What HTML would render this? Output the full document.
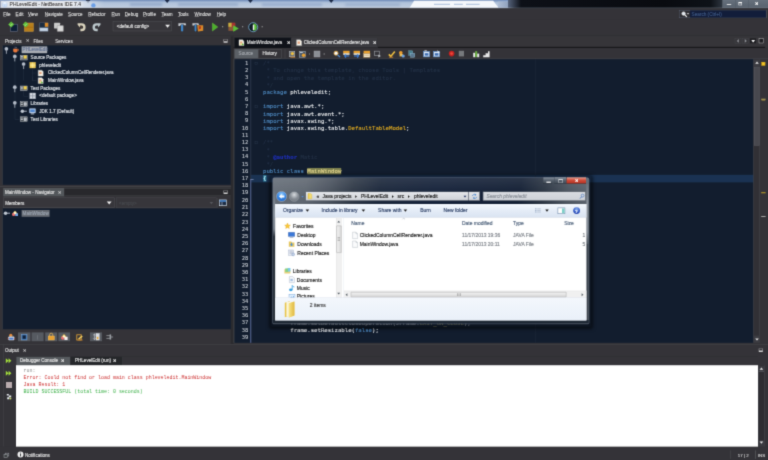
<!DOCTYPE html>
<html lang="en"><head><meta charset="utf-8"><title>PHLevelEdit - NetBeans IDE 7.4</title><style>
html,body{margin:0;padding:0;background:#343338;overflow:hidden}
body{width:768px;height:460px;position:relative;filter:url(#soft)}
#r{position:absolute;left:0;top:0;width:1920px;height:1150px;transform:scale(.4);transform-origin:0 0;overflow:hidden;background:#343338;font-family:"Liberation Sans",sans-serif}
#r div,#r svg{position:absolute;display:block}
#r svg{overflow:visible}
#r .t{white-space:nowrap;line-height:1;transform:translateY(-50%);width:auto;height:auto;-webkit-text-stroke:.35px}
#r .ln{white-space:pre;line-height:1;transform:translateY(-50%);font-family:"DejaVu Sans Mono","Liberation Mono",monospace;font-size:13.6px;color:#c4c9d0;text-align:right;height:auto;-webkit-text-stroke:.3px}
#r .cd{white-space:pre;line-height:1;transform:translateY(-50%);font-family:"DejaVu Sans Mono","Liberation Mono",monospace;font-size:14.15px;color:#eceef0;width:auto;height:auto;-webkit-text-stroke:.25px}
#r .cd span,#r .cd b{position:static}
#r .ot{white-space:pre;line-height:1;transform:translateY(-50%);font-family:"Liberation Mono",monospace;font-size:12.42px;width:auto;height:auto}
#r u{text-decoration:underline;text-underline-offset:1px}
</style></head><body><svg width="0" height="0" style="position:absolute"><filter id="soft" x="0" y="0" width="100%" height="100%" color-interpolation-filters="sRGB"><feConvolveMatrix order="3" kernelMatrix="1 5 1 5 25 5 1 5 1" divisor="49" edgeMode="duplicate" preserveAlpha="true"/></filter></svg><div id="r">
<div style="left:0px;top:0px;width:1920px;height:21px;background:linear-gradient(180deg,#6a86b4 0,#8ea6ca 14%,#b0c2da 32%,#bccade 80%,#d4dce8 100%)"></div>
<div style="left:325px;top:8px;width:80px;height:5.5px;background:#8fa6c8;filter:blur(2px)"></div>
<div style="left:445px;top:8px;width:150px;height:5.5px;background:#93a9c9;filter:blur(2px)"></div>
<div style="left:655px;top:8.5px;width:150px;height:5.5px;background:#8ea5c8;filter:blur(2px)"></div>
<div style="left:862.5px;top:8.5px;width:137.5px;height:5.5px;background:#95aaca;filter:blur(2px)"></div>
<svg style="left:214px;top:0px;width:12px;height:7.5px" viewBox="0 0 12 7.500"><path d="M0 0h12L6 7.500z" fill="#1c2a48"/></svg>
<svg style="left:411.5px;top:0px;width:12px;height:7.5px" viewBox="0 0 12 7.500"><path d="M0 0h12L6 7.500z" fill="#1c2a48"/></svg>
<svg style="left:620.25px;top:0px;width:12px;height:7.5px" viewBox="0 0 12 7.500"><path d="M0 0h12L6 7.500z" fill="#1c2a48"/></svg>
<svg style="left:821.5px;top:0px;width:12px;height:7.5px" viewBox="0 0 12 7.500"><path d="M0 0h12L6 7.500z" fill="#1c2a48"/></svg>
<div style="left:0px;top:2px;width:260px;height:18px;background:linear-gradient(90deg,rgba(226,229,234,.95) 0,rgba(232,235,240,.92) 70%,rgba(225,231,240,.6) 84%,rgba(220,228,240,0) 100%)"></div>
<div style="left:227.5px;top:7.5px;width:11px;height:11px;background:#6a9ee6;border-radius:50%;filter:blur(1.5px)"></div>
<svg style="left:1022.5px;top:1.5px;width:225px;height:19.5px" viewBox="0 0 225 19.500"><path d="M0 19.500L12 0h198l15 19.500z" fill="#f4f7fb"/><path d="M62 9h40M112 9h22M142 9h34" stroke="#b8c8e0" stroke-width="3"/></svg>
<div style="left:1245px;top:4px;width:30px;height:17px;background:linear-gradient(90deg,#aebdd4,#8a9cb8)"></div>
<div style="left:1270px;top:0px;width:650px;height:21px;background:linear-gradient(90deg,#55627a 0,#0d1017 5%,#090b10 60%,#0e1218 78%,#2a313b 82%)"></div>
<div style="left:0px;top:19.25px;width:1920px;height:1.75px;background:linear-gradient(90deg,#aab4c4 0,#aab4c4 66%,#4e5762 67%,#5a636e 100%)"></div>
<div style="left:0px;top:21px;width:1920px;height:1.25px;background:#26272b"></div>
<div style="left:0px;top:2px;width:4px;height:17.5px;background:linear-gradient(90deg,#7e88a4,rgba(140,150,175,0))"></div>
<svg style="left:4.5px;top:4px;width:13.5px;height:15px" viewBox="0 0 13.500 15"><path d="M6.750 .5l6 3v8l-6 3-6-3v-8z" fill="#cfe0f6" stroke="#a8c0e4"/><path d="M6.750 .5l6 3-6 3-6-3z" fill="#eaf3fd"/><path d="M6.750 6.500v8" stroke="#a8c0e4"/></svg>
<div class="t" style="left:24px;top:11.25px;color:#2c2a2c;-webkit-text-stroke:.15px;font-size:12.4px;text-shadow:0 0 6px #fff,0 0 10px #fff,0 0 14px #fff">PHLevelEdit - NetBeans IDE 7.4</div>
<div style="left:1805.75px;top:0px;width:114.25px;height:19.75px;background:linear-gradient(180deg,#66707c,#58626e);border-left:1px solid #7e8892;border-bottom:1px solid #8a949e;box-sizing:border-box"></div>
<div style="left:1817.25px;top:9.75px;width:10.5px;height:2.5px;background:#fff"></div>
<div style="left:1845.5px;top:5px;width:9.5px;height:7.75px;border:1.5px solid #fff;border-top-width:3px;box-sizing:border-box"></div>
<div class="t" style="left:1891.75px;top:8.75px;color:#fff;font-size:10.5px;font-weight:bold;transform:translate(-50%,-50%)">&#10005;</div>
<div style="left:1839px;top:0px;width:1px;height:18.5px;background:#4e5864"></div>
<div style="left:1870.25px;top:0px;width:1px;height:18.5px;background:#4e5864"></div>
<div style="left:0px;top:21.25px;width:1920px;height:26.25px;background:#343338"></div>
<div class="t" style="left:8.25px;top:35.5px;color:#dcdcdc;font-size:11.4px"><u>F</u>ile</div>
<div class="t" style="left:39px;top:35.5px;color:#dcdcdc;font-size:11.4px"><u>E</u>dit</div>
<div class="t" style="left:69.75px;top:35.5px;color:#dcdcdc;font-size:11.4px"><u>V</u>iew</div>
<div class="t" style="left:112px;top:35.5px;color:#dcdcdc;font-size:11.4px"><u>N</u>avigate</div>
<div class="t" style="left:170.25px;top:35.5px;color:#dcdcdc;font-size:11.4px"><u>S</u>ource</div>
<div class="t" style="left:220.5px;top:35.5px;color:#dcdcdc;font-size:11.4px"><u>R</u>efactor</div>
<div class="t" style="left:279px;top:35.5px;color:#dcdcdc;font-size:11.4px"><u>R</u>un</div>
<div class="t" style="left:312px;top:35.5px;color:#dcdcdc;font-size:11.4px"><u>D</u>ebug</div>
<div class="t" style="left:357.5px;top:35.5px;color:#dcdcdc;font-size:11.4px"><u>P</u>rofile</div>
<div class="t" style="left:403.75px;top:35.5px;color:#dcdcdc;font-size:11.4px"><u>T</u>eam</div>
<div class="t" style="left:444.75px;top:35.5px;color:#dcdcdc;font-size:11.4px"><u>T</u>ools</div>
<div class="t" style="left:486.5px;top:35.5px;color:#dcdcdc;font-size:11.4px"><u>W</u>indow</div>
<div class="t" style="left:541.75px;top:35.5px;color:#dcdcdc;font-size:11.4px"><u>H</u>elp</div>
<div style="left:1698.5px;top:25px;width:217.5px;height:20px;background:#2e2e33;border:1px solid #5e687c;box-sizing:border-box"></div>
<div style="left:1725px;top:26.25px;width:190px;height:17.5px;background:#121d3a"></div>
<div class="t" style="left:1729px;top:35.25px;color:#3d5782;font-size:11.6px">Search (Ctrl+I)</div>
<svg style="left:1702.5px;top:27.5px;width:20px;height:16px" viewBox="0 0 20 16"><circle cx="6" cy="6" r="4.2" fill="#dfe6ee" stroke="#fff" stroke-width="1.6"/><path d="M9 9l5 5" stroke="#fff" stroke-width="2.6"/><path d="M14 5h6l-3 3.4z" fill="#fff"/></svg>
<div style="left:0px;top:47.5px;width:1920px;height:42.5px;background:#343338"></div>
<div style="left:0px;top:89px;width:1920px;height:1.25px;background:#2c2e30"></div>
<svg style="left:21px;top:54.5px;width:25px;height:25px" viewBox="0 0 25 25"><rect x="5" y="5.5" width="18" height="18" fill="#0f2038" stroke="#6d7486" stroke-width="1.4"/><path d="M7 -1l7.500 7.500L7 14 -.5 6.500z" fill="#5fc03a"/><path d="M3.500 6.500l2.500 2.500 4.500-5" stroke="#d8f5c8" stroke-width="1.500" fill="none"/></svg>
<svg style="left:56.5px;top:54.5px;width:27.5px;height:25px" viewBox="0 0 27.500 25"><rect x="4" y="2.500" width="22.500" height="21" fill="#b8801c" stroke="#d09a40" stroke-width="1.200"/><rect x="4" y="12" width="22.500" height="2" fill="#a86c10"/><path d="M7 -1l7.500 7.500L7 14 -.5 6.500z" fill="#5fc03a"/><path d="M3.500 6.500l2.500 2.500 4.500-5" stroke="#d8f5c8" stroke-width="1.500" fill="none"/></svg>
<svg style="left:96.5px;top:54.5px;width:25px;height:25px" viewBox="0 0 25 25"><rect x="1.500" y="2" width="22" height="21.500" fill="#9fb4cc"/><rect x="1.500" y="2" width="22" height="12" fill="#1c2c40"/><rect x="15" y="2" width="8.500" height="10" fill="#d98a2a"/><rect x="3" y="15.500" width="19" height="6.500" fill="#c6d4e4"/></svg>
<svg style="left:134px;top:54.5px;width:26.25px;height:25px" viewBox="0 0 26 25"><rect x="1" y="2" width="15" height="14" rx="1" fill="#c9c9c9"/><rect x="9" y="9" width="15.500" height="14.500" rx="1" fill="#dadada" stroke="#8a8a8a" stroke-width="1"/></svg>
<svg style="left:191.5px;top:55.5px;width:24px;height:24px" viewBox="0 0 24 24"><path d="M2 2h10a10 10 0 0 1 0 20h-3v-6h3a4 4 0 0 0 0-8h-4v5l-6-7z" fill="#d9d2bc"/><path d="M9 10l4 3" stroke="#6a4a2a" stroke-width="2"/></svg>
<svg style="left:229px;top:55.5px;width:24.5px;height:24px" viewBox="0 0 24 24"><path d="M22 2H12a10 10 0 0 0 0 20h3v-6h-3a4 4 0 0 1 0-8h4v5l6-7z" fill="#bcc8cc"/></svg>
<div style="left:282px;top:53.25px;width:147px;height:24.25px;background:#37363b;border:1px solid #56585c;box-sizing:border-box"></div>
<div class="t" style="left:292px;top:65.5px;color:#e6e6e6;font-size:11.4px">&lt;default config&gt;</div>
<svg style="left:412.5px;top:61.5px;width:12px;height:7.5px" viewBox="0 0 12 7.500"><path d="M0 0h12l-6 7.500z" fill="#f0f0f0"/></svg>
<svg style="left:444px;top:55px;width:22.5px;height:25px" viewBox="0 0 22.500 25"><path d="M2 3h18l1.500 5h-5l-1-1.500h-7l-2.500 3.500H2z" fill="#c9ced4"/><rect x="8.500" y="6.500" width="5.500" height="17" rx="2" fill="#3f86c8"/></svg>
<svg style="left:480px;top:55px;width:30px;height:25px" viewBox="0 0 30 25"><path d="M1 3h15l1.500 4.500h-4l-1-1.500H7l-2 3H1z" fill="#c9ced4"/><rect x="6.500" y="6.500" width="4.500" height="17" rx="2" fill="#3f86c8"/><path d="M13 8h15v14l-13 1.500z" fill="#d98a2a"/><path d="M17 10l6 1-1 6-5 2z" fill="#b43a1a"/></svg>
<svg style="left:530px;top:56.5px;width:15px;height:21px" viewBox="0 0 15 21"><path d="M1 .5L14.500 10.500 1 20.500z" fill="#4cae2c" stroke="#6fd044" stroke-width="1"/></svg>
<div style="left:554.75px;top:65.5px;width:2.75px;height:2.75px;background:#bfbfbf"></div>
<svg style="left:570px;top:55px;width:28.5px;height:25px" viewBox="0 0 28.500 25"><rect x="1" y="2" width="17" height="20" fill="#8a5a3a"/><rect x="1" y="2" width="8.500" height="10" fill="#c8b040"/><rect x="9.500" y="2" width="8.500" height="10" fill="#a83030"/><path d="M13 8l14 8.500-14 8z" fill="#5cc038"/></svg>
<div style="left:604.75px;top:65.5px;width:2.75px;height:2.75px;background:#bfbfbf"></div>
<svg style="left:619.5px;top:55px;width:26px;height:26px" viewBox="0 0 26 26"><circle cx="13" cy="13" r="11.300" fill="#0d1a24" stroke="#7fb4d8" stroke-width="2"/><path d="M13 4a9 9 0 0 1 0 18z" fill="#5cc038"/><rect x="12" y="7" width="3.500" height="13" fill="#f4f4f4"/></svg>
<div style="left:653.75px;top:65.5px;width:2.75px;height:2.75px;background:#bfbfbf"></div>
<div class="t" style="left:12.5px;top:102.5px;color:#dcdcdc;font-size:11.4px">Projects</div>
<div class="t" style="left:64px;top:102.5px;color:#dcdcdc;font-size:10px">&#10005;</div>
<div class="t" style="left:83.75px;top:102.5px;color:#dcdcdc;font-size:11.4px">Files</div>
<div class="t" style="left:138px;top:102.5px;color:#dcdcdc;font-size:11.4px">Services</div>
<div style="left:559px;top:97.5px;width:10px;height:9px;border:1px solid #d0d0d0;box-sizing:border-box;border-bottom-width:4px"></div>
<div style="left:6px;top:113px;width:571px;height:348.75px;background:#121d2e;border-left:1.5px solid #4a4d50;border-top:1px solid #2a2d30;box-sizing:border-box"></div>
<div style="left:577px;top:90.5px;width:7.25px;height:769.5px;background:#2a2a2e"></div>
<div style="left:36.5px;top:151.12px;width:1px;height:146.5px;background:#2c384a"></div>
<div style="left:58.5px;top:170.38px;width:1px;height:31px;background:#2c384a"></div>
<div style="left:81px;top:173.12px;width:1px;height:9.5px;background:#2c384a"></div>
<div style="left:81px;top:182.12px;width:10px;height:1px;background:#2c384a"></div>
<div style="left:81px;top:192.38px;width:1px;height:9.5px;background:#2c384a"></div>
<div style="left:81px;top:201.38px;width:10px;height:1px;background:#2c384a"></div>
<div style="left:81px;top:182.12px;width:1px;height:19.25px;background:#2c384a"></div>
<div style="left:58.5px;top:228.12px;width:1px;height:11.75px;background:#2c384a"></div>
<div style="left:58.5px;top:239.88px;width:11.25px;height:1px;background:#2c384a"></div>
<div style="left:36.5px;top:297.62px;width:11.25px;height:1px;background:#2c384a"></div>
<svg style="left:10.75px;top:116.88px;width:10px;height:17.5px" viewBox="0 0 8 14"><circle cx="4" cy="4" r="3.700" fill="#b4bcc8"/><rect x="3" y="6" width="2" height="8" fill="#98a0ac"/></svg>
<svg style="left:31.5px;top:117.38px;width:15px;height:14px" viewBox="0 0 15 14"><path d="M1 5h11v5a4 4 0 0 1-4 4H5a4 4 0 0 1-4-4z" fill="#e8783c"/><path d="M12 6h2v4h-2" fill="none" stroke="#e8783c" stroke-width="1.500"/><path d="M5 0q2 2 0 4M8 0q2 2 0 4" stroke="#c8c8d8" stroke-width="1" fill="none"/></svg>
<div style="left:54.25px;top:115.88px;width:63.5px;height:17.25px;background:#a9adb4"></div>
<div class="t" style="left:56.5px;top:124.38px;color:#637291;font-size:11.4px">PHLevelEdit</div>
<svg style="left:31.75px;top:136.12px;width:10px;height:17.5px" viewBox="0 0 8 14"><circle cx="4" cy="4" r="3.700" fill="#b4bcc8"/><rect x="3" y="6" width="2" height="8" fill="#98a0ac"/></svg>
<svg style="left:50px;top:137.12px;width:18.5px;height:13.5px" viewBox="0 0 18.500 13.500"><rect x=".5" y="1" width="17.500" height="12" fill="#5a6068" stroke="#c8ccd0" stroke-width="1"/><rect x="9" y="1.500" width="8" height="8" fill="#f0d050"/><rect x="2" y="3" width="5" height="2" fill="#d8dce0"/><rect x="2" y="7" width="5" height="2" fill="#d8dce0"/></svg>
<div class="t" style="left:76.5px;top:143.62px;color:#dfe3e8;font-size:11.4px">Source Packages</div>
<svg style="left:53.75px;top:155.38px;width:10px;height:17.5px" viewBox="0 0 8 14"><circle cx="4" cy="4" r="3.700" fill="#b4bcc8"/><rect x="3" y="6" width="2" height="8" fill="#98a0ac"/></svg>
<svg style="left:73.75px;top:155.38px;width:15.5px;height:15.5px" viewBox="0 0 15.500 15.500"><rect x=".5" y=".5" width="14.500" height="14.500" fill="#f0d060" stroke="#d8b040"/><path d="M7.750 1v14M1 7.750h14" stroke="#fff3b0" stroke-width="1.600"/></svg>
<div class="t" style="left:98.25px;top:162.88px;color:#dfe3e8;font-size:11.4px">phleveledit</div>
<svg style="left:95px;top:174.62px;width:13.5px;height:15.5px" viewBox="0 0 13.500 15.500"><path d="M.5.5h9l3.500 3.500v11H.5z" fill="#f6f4ec" stroke="#c4c4c0"/><rect x="3" y="4.500" width="6" height="6" fill="#ecc0a0"/><path d="M3.500 6.500h5M3.500 9h5" stroke="#d87850" stroke-width="1.100"/></svg>
<div class="t" style="left:120px;top:182.12px;color:#dfe3e8;font-size:11.15px">ClickedColumnCellRenderer.java</div>
<svg style="left:95px;top:193.88px;width:13.5px;height:15.5px" viewBox="0 0 13.500 15.500"><path d="M.5.5h9l3.500 3.500v11H.5z" fill="#f6f4ec" stroke="#c4c4c0"/><rect x="3" y="4.500" width="6" height="6" fill="#ecc0a0"/><path d="M3.500 6.500h5M3.500 9h5" stroke="#d87850" stroke-width="1.100"/><path d="M8 9l5 3-5 3z" fill="#58b838"/><rect x="2.500" y="9" width="5" height="5" fill="#e8d890"/></svg>
<div class="t" style="left:120px;top:201.38px;color:#dfe3e8;font-size:11.4px">MainWindow.java</div>
<svg style="left:31.75px;top:213.12px;width:10px;height:17.5px" viewBox="0 0 8 14"><circle cx="4" cy="4" r="3.700" fill="#b4bcc8"/><rect x="3" y="6" width="2" height="8" fill="#98a0ac"/></svg>
<svg style="left:50px;top:214.12px;width:18.5px;height:13.5px" viewBox="0 0 18.500 13.500"><rect x=".5" y="1" width="17.500" height="12" fill="#5a6068" stroke="#c8ccd0" stroke-width="1"/><rect x="9" y="1.500" width="8" height="8" fill="#f0d050"/><rect x="2" y="3" width="5" height="2" fill="#d8dce0"/><rect x="2" y="7" width="5" height="2" fill="#d8dce0"/></svg>
<div class="t" style="left:76.5px;top:220.62px;color:#dfe3e8;font-size:11.4px">Test Packages</div>
<svg style="left:73.75px;top:232.38px;width:15.5px;height:15.5px" viewBox="0 0 15.500 15.500"><rect x=".5" y=".5" width="14.500" height="14.500" fill="#d8dce4" stroke="#a8b0bc"/><path d="M7.750 1v14M1 7.750h14" stroke="#7a8494" stroke-width="1.600"/></svg>
<div class="t" style="left:98.25px;top:239.88px;color:#dfe3e8;font-size:11.4px">&lt;default package&gt;</div>
<svg style="left:31.75px;top:251.62px;width:10px;height:17.5px" viewBox="0 0 8 14"><circle cx="4" cy="4" r="3.700" fill="#b4bcc8"/><rect x="3" y="6" width="2" height="8" fill="#98a0ac"/></svg>
<svg style="left:50px;top:252.63px;width:18.5px;height:13.5px" viewBox="0 0 18.500 13.500"><rect x=".5" y="1" width="17.500" height="12" fill="#4a5058" stroke="#c8ccd0" stroke-width="1"/><rect x="9.500" y="3" width="7" height="8" fill="#e4e8ec"/><path d="M11 5h4M11 7h4M11 9h4" stroke="#707888" stroke-width="1"/><rect x="2" y="3" width="5" height="2" fill="#d8dce0"/><rect x="2" y="7" width="5" height="2" fill="#d8dce0"/></svg>
<div class="t" style="left:76.5px;top:259.12px;color:#dfe3e8;font-size:11.4px">Libraries</div>
<svg style="left:51.25px;top:273.38px;width:16px;height:10px" viewBox="0 0 13 8"><circle cx="4" cy="4" r="3.600" fill="#c0c8d2"/><rect x="6" y="3" width="7" height="2" fill="#b0b8c4"/></svg>
<svg style="left:72.5px;top:270.88px;width:16.5px;height:15.5px" viewBox="0 0 16.500 15.500"><rect x=".5" y=".5" width="15.500" height="11" rx="1" fill="#dfe8f4" stroke="#7a9ac8"/><rect x="2.500" y="2.500" width="11.500" height="7" fill="#4f86d0"/><rect x="4" y="12.500" width="8.500" height="2.500" fill="#c0c8d4"/></svg>
<div class="t" style="left:98.25px;top:278.38px;color:#dfe3e8;font-size:11.4px">JDK 1.7 (Default)</div>
<svg style="left:50px;top:291.12px;width:18.5px;height:13.5px" viewBox="0 0 18.500 13.500"><rect x=".5" y="1" width="17.500" height="12" fill="#4a5058" stroke="#c8ccd0" stroke-width="1"/><rect x="9.500" y="3" width="7" height="8" fill="#e4e8ec"/><path d="M11 5h4M11 7h4M11 9h4" stroke="#707888" stroke-width="1"/><rect x="2" y="3" width="5" height="2" fill="#d8dce0"/><rect x="2" y="7" width="5" height="2" fill="#d8dce0"/></svg>
<div class="t" style="left:76.5px;top:297.62px;color:#dfe3e8;font-size:11.4px">Test Libraries</div>
<div style="left:0px;top:466px;width:577.5px;height:1.25px;background:#55585b"></div>
<div style="left:8.25px;top:470px;width:153px;height:20.5px;background:#53575b"></div>
<div class="t" style="left:12.5px;top:480.5px;color:#e0e0e0;font-size:11.4px">MainWindow - Navigator</div>
<div class="t" style="left:146px;top:480.5px;color:#e0e0e0;font-size:10px">&#10005;</div>
<div style="left:161.25px;top:470.5px;width:415.75px;height:19px;background:#28282c;border-top:1px solid #4a4c50;border-bottom:1px solid #4a4c50;box-sizing:border-box"></div>
<div style="left:559px;top:475.5px;width:10px;height:9px;border:1px solid #d0d0d0;box-sizing:border-box;border-bottom-width:4px"></div>
<div style="left:8.25px;top:494px;width:278px;height:26.25px;background:#37363b;border:1px solid #56585c;box-sizing:border-box"></div>
<div class="t" style="left:13px;top:507.5px;color:#e6e6e6;font-size:11.4px">Members</div>
<svg style="left:266.5px;top:504px;width:12px;height:7.5px" viewBox="0 0 12 7.500"><path d="M0 0h12l-6 7.500z" fill="#f0f0f0"/></svg>
<div style="left:291px;top:494px;width:250px;height:26.25px;background:#37363b;border:1px solid #4a4c50;box-sizing:border-box"></div>
<div class="t" style="left:297.5px;top:507.5px;color:#47494e;font-size:11.4px">&lt;empty&gt;</div>
<svg style="left:524px;top:504.5px;width:9px;height:6px" viewBox="0 0 12 7.500"><path d="M0 0h12l-6 7.500z" fill="#56585d"/></svg>
<div style="left:544px;top:494.5px;width:26.5px;height:25px;background:#343338;border-left:1px solid #4a4c50;box-sizing:border-box"></div>
<svg style="left:547.5px;top:498.5px;width:18.5px;height:16px" viewBox="0 0 18.500 16"><rect x=".8" y=".8" width="17" height="14.400" fill="#1c2c44" stroke="#d8e4f0" stroke-width="1.600"/><rect x="1.500" y="1.500" width="15.500" height="4" fill="#4a88d0"/><path d="M7 6v9" stroke="#d8e4f0" stroke-width="1.400"/></svg>
<div style="left:6px;top:521px;width:571px;height:302px;background:#121d2e;border-left:1.5px solid #4a4d50;box-sizing:border-box"></div>
<svg style="left:9px;top:528px;width:16px;height:10px" viewBox="0 0 13 8"><circle cx="4" cy="4" r="3.600" fill="#c0c8d2"/><rect x="6" y="3" width="7" height="2" fill="#b0b8c4"/></svg>
<svg style="left:29px;top:525.5px;width:17.5px;height:15px" viewBox="0 0 17.500 15"><path d="M8.500 1l7 8H1.500z" fill="#f0c040"/><circle cx="5" cy="10" r="4" fill="#e87070"/><rect x="9" y="7" width="7" height="7" fill="#78a8e8"/><circle cx="8.500" cy="6" r="3.500" fill="#fff8d0"/></svg>
<div style="left:54.25px;top:524.5px;width:70px;height:17.25px;background:#676c74"></div>
<div class="t" style="left:56.5px;top:533.25px;color:#9aa3b0;font-size:11.4px">MainWindow</div>
<div style="left:45px;top:831.25px;width:30.75px;height:21.5px;background:#565a61"></div>
<div style="left:79.25px;top:831.25px;width:30px;height:21.5px;background:#565a61"></div>
<div style="left:112.5px;top:831.25px;width:30px;height:21.5px;background:#565a61"></div>
<div style="left:145.75px;top:831.25px;width:29.25px;height:21.5px;background:#565a61"></div>
<div style="left:225px;top:831.25px;width:30px;height:21.5px;background:#565a61"></div>
<svg style="left:18.75px;top:832.5px;width:18.75px;height:20px" viewBox="0 0 19 20"><circle cx="8" cy="5" r="4" fill="#e89040"/><rect x="2" y="8" width="15" height="10" rx="2" fill="#e8ecf4"/><rect x="4" y="11" width="11" height="5" fill="#4878c8"/><path d="M2 12l-2 3M17 12l2 3" stroke="#d04030" stroke-width="1.500"/></svg>
<svg style="left:53px;top:834.5px;width:15px;height:15.5px" viewBox="0 0 15 15.500"><rect x=".5" y=".5" width="14" height="14.500" fill="#3a6ea8" stroke="#88b0e0"/><rect x="3.500" y="3.500" width="8" height="8.500" fill="#0f2038"/></svg>
<div style="left:93.5px;top:837.5px;width:1.5px;height:11.5px;background:#8a8e94"></div>
<svg style="left:119.5px;top:834px;width:16.5px;height:16.5px" viewBox="0 0 16.500 16.500"><rect x=".5" y="6" width="15.500" height="10" fill="#e8a030" stroke="#f8c868"/><path d="M4 6V3a4 4 0 0 1 8 0v3" fill="none" stroke="#f0b850" stroke-width="1.800"/></svg>
<svg style="left:151.5px;top:833.5px;width:18px;height:17px" viewBox="0 0 18 17"><path d="M8 1l7 8H1z" fill="#f0c040"/><circle cx="5" cy="11" r="4.500" fill="#e87070"/><rect x="9" y="8" width="8" height="8" fill="#f8f0f0"/><circle cx="8" cy="7" r="3" fill="#fff8d0"/></svg>
<svg style="left:191px;top:834.5px;width:17.5px;height:16.5px" viewBox="0 0 17.500 16.500"><rect x="1" y="2" width="11" height="13" fill="none" stroke="#e8a838" stroke-width="2"/><path d="M4 12l9-8 3 2-9 8z" fill="#f8d060"/><path d="M3 15h13" stroke="#e09030" stroke-width="1.500"/></svg>
<svg style="left:231.5px;top:833px;width:17.5px;height:18.5px" viewBox="0 0 17.500 18.500"><rect x="8" y="1" width="8" height="16" fill="#d8dce4" stroke="#f0f0f0"/><rect x="10" y="9" width="4" height="6" fill="#e8a838"/><path d="M4 2v14M1 5l3-3 3 3M1 13l3 3 3-3" stroke="#e8ecf0" stroke-width="1.400" fill="none"/></svg>
<svg style="left:264.5px;top:834px;width:18.75px;height:17px" viewBox="0 0 19 17"><path d="M1 5h9M1 12h9" stroke="#b8bcc0" stroke-width="1.600"/><path d="M10 8.500h8" stroke="#b8bcc0" stroke-width="1.600"/><rect x="9" y="2" width="4" height="13" fill="#9a9ea4"/></svg>
<div style="left:0px;top:860px;width:1920px;height:1.25px;background:#4c4f52"></div>
<div style="left:584px;top:91px;width:1336px;height:28.5px;background:#363539"></div>
<div style="left:584px;top:117.25px;width:1329px;height:2.25px;background:#18181b"></div>
<div style="left:586px;top:94px;width:142px;height:25.5px;background:#0f1219;border:1px solid #2a2d33;border-bottom:none;box-sizing:border-box"></div>
<svg style="left:596.5px;top:98.5px;width:13.5px;height:15.5px" viewBox="0 0 13.500 15.500"><path d="M.5.5h9l3.500 3.500v11H.5z" fill="#f6f4ec" stroke="#c4c4c0"/><rect x="3" y="4.500" width="6" height="6" fill="#ecc0a0"/><path d="M3.500 6.500h5M3.500 9h5" stroke="#d87850" stroke-width="1.100"/><path d="M8 9l5 3-5 3z" fill="#58b838"/><rect x="2.500" y="9" width="5" height="5" fill="#e8d890"/></svg>
<div class="t" style="left:616.75px;top:106.5px;color:#e4e4e4;font-size:11.4px">MainWindow.java</div>
<div class="t" style="left:716.5px;top:106.5px;color:#e4e4e4;font-size:9px;font-weight:bold">&#10005;</div>
<div style="left:728px;top:94.5px;width:216.5px;height:24px;background:#3b3b40;border-right:1px solid #2a2c2e;box-sizing:border-box"></div>
<svg style="left:741px;top:98.5px;width:13.5px;height:15.5px" viewBox="0 0 13.500 15.500"><path d="M.5.5h9l3.500 3.500v11H.5z" fill="#f6f4ec" stroke="#c4c4c0"/><rect x="3" y="4.500" width="6" height="6" fill="#ecc0a0"/><path d="M3.500 6.500h5M3.500 9h5" stroke="#d87850" stroke-width="1.100"/></svg>
<div class="t" style="left:759.25px;top:106.5px;color:#e4e4e4;font-size:11.15px">ClickedColumnCellRenderer.java</div>
<div class="t" style="left:933.5px;top:106.5px;color:#e4e4e4;font-size:9px;font-weight:bold">&#10005;</div>
<div style="left:1837px;top:95.5px;width:16px;height:13.5px;border:1px solid #484a4f;box-sizing:border-box"></div>
<div style="left:1855.5px;top:95.5px;width:16px;height:13.5px;border:1px solid #484a4f;box-sizing:border-box"></div>
<svg style="left:1841px;top:97px;width:7px;height:10.5px" viewBox="0 0 7.500 11"><path d="M6.500 .5v10L1 5.500z" fill="#8e9096"/></svg>
<svg style="left:1860.5px;top:97px;width:7px;height:10.5px" viewBox="0 0 7.500 11"><path d="M1 .5v10l5.500-5z" fill="#8e9096"/></svg>
<div style="left:1875.25px;top:96px;width:14.5px;height:12px;background:#1d1d21"></div>
<svg style="left:1877.5px;top:99.5px;width:10px;height:5.5px" viewBox="0 0 12 7"><path d="M0 0h12l-5 7h-2z" fill="#f4f4f4"/></svg>
<div style="left:1896.75px;top:96px;width:13.25px;height:12px;background:#1d1d21;border:1.6px solid #e4e4e4;box-sizing:border-box"></div>
<div style="left:584px;top:120.5px;width:1336px;height:26.5px;background:#343338"></div>
<div style="left:584px;top:146.5px;width:1336px;height:1.5px;background:#5a6068"></div>
<div style="left:586.25px;top:122.5px;width:58.25px;height:23px;background:#5b6066"></div>
<div class="t" style="left:596.5px;top:134.25px;color:#a4a8ae;font-size:11.4px">Source</div>
<div style="left:644.5px;top:122.5px;width:59.5px;height:23px;background:#343338;border:1px solid #5b5e62;box-sizing:border-box"></div>
<div class="t" style="left:656.5px;top:134.25px;color:#e4e4e4;font-size:11.4px">History</div>
<div style="left:711.5px;top:123px;width:1px;height:22.5px;background:#55585b"></div>
<svg style="left:721.75px;top:125.5px;width:18.5px;height:19px" viewBox="0 0 18.5 19"><rect x="1" y="2" width="14" height="14" fill="#6a7078" stroke="#c8ccd0"/><circle cx="9" cy="8" r="4" fill="#f0c040"/><path d="M4 17h12" stroke="#e89030" stroke-width="2"/></svg>
<svg style="left:746.75px;top:125.5px;width:18.5px;height:19px" viewBox="0 0 18.5 19"><rect x="1" y="2" width="15" height="15" fill="#4a5868" stroke="#c8d0d8"/><circle cx="12" cy="12" r="4.500" fill="#e8a030"/><rect x="3" y="4" width="7" height="2" fill="#dfe8f0"/></svg>
<div style="left:772.5px;top:133.5px;width:2.75px;height:2.75px;background:#bfbfbf"></div>
<svg style="left:784px;top:125.5px;width:18.5px;height:19px" viewBox="0 0 18.5 19"><rect x="1" y="1.500" width="15" height="15" fill="#8a8e94" stroke="#a8acb2"/></svg>
<div style="left:809.25px;top:133.5px;width:2.75px;height:2.75px;background:#bfbfbf"></div>
<svg style="left:832.5px;top:125.5px;width:18.5px;height:19px" viewBox="0 0 18.5 19"><circle cx="7" cy="7" r="5" fill="#f4f8ff" stroke="#e8a838" stroke-width="2"/><path d="M11 11l6 6" stroke="#4a90e0" stroke-width="3"/></svg>
<svg style="left:856.75px;top:125.5px;width:18.5px;height:19px" viewBox="0 0 18.5 19"><rect x="1" y="1" width="16" height="6" fill="#e8a030"/><rect x="1" y="7" width="16" height="4" fill="#f4ead0"/><path d="M4 14h12M4 14l4-4M4 14l4 4" stroke="#3a80e0" stroke-width="2.600" fill="none"/></svg>
<svg style="left:882.5px;top:125.5px;width:18.5px;height:19px" viewBox="0 0 18.5 19"><rect x="1" y="1" width="16" height="6" fill="#e8a030"/><rect x="1" y="7" width="16" height="4" fill="#f4ead0"/><path d="M2 14h12M14 14l-4-4M14 14l-4 4" stroke="#3a80e0" stroke-width="2.600" fill="none"/></svg>
<svg style="left:908.25px;top:125.5px;width:18.5px;height:19px" viewBox="0 0 18.5 19"><rect x="1" y="1" width="16" height="7" fill="#e8a030"/><rect x="1" y="8" width="16" height="9" fill="#f4ead0" stroke="#c8a060"/><path d="M3 12h12" stroke="#b08850" stroke-width="1.500"/></svg>
<svg style="left:934.5px;top:125.5px;width:18.5px;height:19px" viewBox="0 0 18.5 19"><rect x="1.500" y="2" width="12" height="11" fill="none" stroke="#9a9ea4" stroke-width="1.600"/><path d="M11 10l6 4-6 4z" fill="#c8ccd0"/></svg>
<svg style="left:970px;top:125.5px;width:18.5px;height:19px" viewBox="0 0 18.5 19"><path d="M2 10l5 5L17 3" stroke="#f0c040" stroke-width="4" fill="none"/><path d="M3 17h10" stroke="#e89030" stroke-width="2"/></svg>
<svg style="left:995px;top:125.5px;width:18.5px;height:19px" viewBox="0 0 18.5 19"><circle cx="7" cy="6" r="4.500" fill="#f0a030"/><rect x="4" y="9" width="8" height="6" fill="#e8c060"/><circle cx="13" cy="14" r="4" fill="#6aa0e0"/></svg>
<svg style="left:1021px;top:125.5px;width:18.5px;height:19px" viewBox="0 0 18.5 19"><rect x="1" y="1" width="10" height="11" fill="#4a8090" stroke="#7ab0c0"/><rect x="6" y="7" width="10" height="10" fill="#5a7890" stroke="#9ac0d8"/></svg>
<svg style="left:1058px;top:125.5px;width:18.5px;height:19px" viewBox="0 0 18.5 19"><rect x="1" y="3" width="15" height="13" fill="#dfeaf8" stroke="#5a90d0" stroke-width="1.600"/><rect x="4" y="7" width="9" height="6" fill="#3a6ab0"/><path d="M3 1h6" stroke="#fff" stroke-width="2"/></svg>
<svg style="left:1082.5px;top:125.5px;width:18.5px;height:19px" viewBox="0 0 18.5 19"><rect x="1" y="3" width="15" height="13" fill="#dfeaf8" stroke="#5a90d0" stroke-width="1.600"/><rect x="4" y="7" width="9" height="6" fill="#3a6ab0"/><path d="M10 1l6 4" stroke="#fff" stroke-width="2"/></svg>
<svg style="left:1120.75px;top:126px;width:16px;height:16px" viewBox="0 0 16 16"><circle cx="8" cy="8" r="7" fill="#c42020"/><circle cx="8" cy="8" r="3.500" fill="#e84a3a"/></svg>
<div style="left:1147px;top:127px;width:13px;height:14px;background:#77797c"></div>
<svg style="left:1182px;top:125.5px;width:18.5px;height:19px" viewBox="0 0 18.5 19"><rect x="1" y="6" width="5" height="11" fill="#e8ece8"/><rect x="6" y="2" width="5" height="15" fill="#6ab040"/><rect x="11" y="8" width="5" height="9" fill="#e8ece8"/></svg>
<svg style="left:1206.5px;top:125.5px;width:18.5px;height:19px" viewBox="0 0 18.5 19"><path d="M1 17v-5h6V7h6V2h4v15z" fill="#e8e8e8"/></svg>
<div style="left:584px;top:148px;width:2.5px;height:709px;background:#4a4d50"></div>
<div style="left:586px;top:148px;width:1297.5px;height:708.5px;background:#121d2e"></div>
<div style="left:627.25px;top:437.25px;width:1256.25px;height:19px;background:#1a3252"></div>
<div style="left:625.5px;top:148px;width:2px;height:708.5px;background:#333d52"></div>
<div style="left:1338.5px;top:148px;width:1px;height:708.5px;background:#222c3e"></div>
<div class="ln" style="left:586px;top:158px;width:34.5px">1</div>
<div class="cd" style="left:657.5px;top:158px"><span style="color:#243247">/*</span></div>
<div class="ln" style="left:586px;top:176.02px;width:34.5px">2</div>
<div class="cd" style="left:657.5px;top:176.02px"><span style="color:#243247"> * To change this template, choose Tools | Templates</span></div>
<div class="ln" style="left:586px;top:194.05px;width:34.5px">3</div>
<div class="cd" style="left:657.5px;top:194.05px"><span style="color:#243247"> * and open the template in the editor.</span></div>
<div class="ln" style="left:586px;top:212.07px;width:34.5px">4</div>
<div class="cd" style="left:657.5px;top:212.07px"><span style="color:#243247"> */</span></div>
<div class="ln" style="left:586px;top:230.1px;width:34.5px">5</div>
<div class="cd" style="left:657.5px;top:230.1px"><span style="color:#4f8cc4">package</span> phleveledit;</div>
<div class="ln" style="left:586px;top:248.12px;width:34.5px">6</div>
<div class="ln" style="left:586px;top:266.15px;width:34.5px">7</div>
<div class="cd" style="left:657.5px;top:266.15px"><span style="color:#4f8cc4">import</span> java.awt.*;</div>
<div class="ln" style="left:586px;top:284.18px;width:34.5px">8</div>
<div class="cd" style="left:657.5px;top:284.18px"><span style="color:#4f8cc4">import</span> java.awt.event.*;</div>
<div class="ln" style="left:586px;top:302.2px;width:34.5px">9</div>
<div class="cd" style="left:657.5px;top:302.2px"><span style="color:#4f8cc4">import</span> javax.swing.*;</div>
<div class="ln" style="left:586px;top:320.23px;width:34.5px">10</div>
<div class="cd" style="left:657.5px;top:320.23px"><span style="color:#4f8cc4">import</span> javax.swing.table.<span style="color:#e8b020">DefaultTableModel</span>;</div>
<div class="ln" style="left:586px;top:338.25px;width:34.5px">11</div>
<div class="ln" style="left:586px;top:356.27px;width:34.5px">12</div>
<div class="cd" style="left:657.5px;top:356.27px"><span style="color:#243247">/**</span></div>
<div class="ln" style="left:586px;top:374.3px;width:34.5px">13</div>
<div class="cd" style="left:657.5px;top:374.3px"><span style="color:#243247"> *</span></div>
<div class="ln" style="left:586px;top:392.33px;width:34.5px">14</div>
<div class="cd" style="left:657.5px;top:392.33px"><span style="color:#243247"> * </span><b style="color:#1f30bc">@author</b><span style="color:#243247"> Matic</span></div>
<div class="ln" style="left:586px;top:410.35px;width:34.5px">15</div>
<div class="cd" style="left:657.5px;top:410.35px"><span style="color:#243247"> */</span></div>
<div class="ln" style="left:586px;top:428.38px;width:34.5px">16</div>
<div class="cd" style="left:657.5px;top:428.38px"><span style="color:#4f8cc4">public</span> <span style="color:#4f8cc4">class</span> <span style="background:#7f8250;color:#e8d890">MainWindow</span></div>
<div class="ln" style="left:586px;top:446.4px;width:34.5px">17</div>
<div class="cd" style="left:657.5px;top:446.4px"><span style="background:#2f7f9c;color:#d8f4ff">{</span></div>
<div class="ln" style="left:586px;top:464.42px;width:34.5px">18</div>
<div class="ln" style="left:586px;top:482.45px;width:34.5px">19</div>
<div class="ln" style="left:586px;top:500.48px;width:34.5px">20</div>
<div class="ln" style="left:586px;top:518.5px;width:34.5px">21</div>
<div class="ln" style="left:586px;top:536.53px;width:34.5px">22</div>
<div class="ln" style="left:586px;top:554.55px;width:34.5px">23</div>
<div class="ln" style="left:586px;top:572.58px;width:34.5px">24</div>
<div class="ln" style="left:586px;top:590.6px;width:34.5px">25</div>
<div class="ln" style="left:586px;top:608.62px;width:34.5px">26</div>
<div class="ln" style="left:586px;top:626.65px;width:34.5px">27</div>
<div class="ln" style="left:586px;top:644.67px;width:34.5px">28</div>
<div class="ln" style="left:586px;top:662.7px;width:34.5px">29</div>
<div class="ln" style="left:586px;top:680.73px;width:34.5px">30</div>
<div class="ln" style="left:586px;top:698.75px;width:34.5px">31</div>
<div class="ln" style="left:586px;top:716.77px;width:34.5px">32</div>
<div class="ln" style="left:586px;top:734.8px;width:34.5px">33</div>
<div class="ln" style="left:586px;top:752.83px;width:34.5px">34</div>
<div class="ln" style="left:586px;top:770.85px;width:34.5px">35</div>
<div class="ln" style="left:586px;top:788.88px;width:34.5px">36</div>
<div class="ln" style="left:586px;top:806.9px;width:34.5px">37</div>
<div class="cd" style="left:657.5px;top:806.9px"><span style="opacity:.5">        frame.setDefaultCloseOperation(JFrame.<span style="color:#b8b070">EXIT_ON_CLOSE</span>);</span></div>
<div class="ln" style="left:586px;top:824.92px;width:34.5px">38</div>
<div class="cd" style="left:657.5px;top:824.92px">        frame.setResizable(<span style="color:#4f8cc4">false</span>);</div>
<div class="ln" style="left:586px;top:842.95px;width:34.5px">39</div>
<div style="left:637px;top:154.5px;width:7px;height:7px;border:1px solid #2c3a50;box-sizing:border-box"></div>
<div style="left:637px;top:262.65px;width:7px;height:7px;border:1px solid #2c3a50;box-sizing:border-box"></div>
<div style="left:637px;top:352.77px;width:7px;height:7px;border:1px solid #2c3a50;box-sizing:border-box"></div>
<div style="left:626px;top:448.25px;width:7.5px;height:1.25px;background:#7d8cb4"></div>
<div style="left:626px;top:448.25px;width:1.5px;height:408.25px;background:#5f71a6"></div>
<div style="left:1883.5px;top:148px;width:16px;height:708.5px;background:#313035;border-left:1px solid #4e5055;border-right:1px solid #4e5055;box-sizing:border-box"></div>
<div style="left:1884.5px;top:167px;width:14px;height:196.5px;background:#48484e;border:1px solid #5c5e64;box-sizing:border-box"></div>
<div style="left:1884.5px;top:148.5px;width:14px;height:18px;background:#3c3c42"></div>
<div style="left:1884.5px;top:838.5px;width:14px;height:18px;background:#3c3c42"></div>
<svg style="left:1887.5px;top:154px;width:9px;height:5.5px" viewBox="0 0 9 5.500"><path d="M0 5.500h9L4.500 0z" fill="#e8e8e8"/></svg>
<svg style="left:1887.5px;top:846px;width:9px;height:5.5px" viewBox="0 0 9 5.500"><path d="M0 0h9L4.500 5.500z" fill="#e8e8e8"/></svg>
<div style="left:1899.5px;top:148px;width:20.5px;height:708.5px;background:#343338"></div>
<div style="left:1904px;top:155px;width:9px;height:9px;background:#f0c428;border:1px solid #c89a10;box-sizing:border-box"></div>
<div style="left:1902.5px;top:481px;width:11.5px;height:2px;background:#e8c020"></div>
<div style="left:1902.5px;top:247px;width:11.5px;height:1.5px;background:#e8d060"></div>
<div style="left:1904px;top:250.5px;width:8.5px;height:1.5px;background:#c8b040"></div>
<div style="left:1902.5px;top:540px;width:11.5px;height:1.5px;background:#c4c4c0"></div>
<div style="left:7.5px;top:861.25px;width:1.25px;height:255px;background:#4a4d50"></div>
<div class="t" style="left:12.5px;top:876.25px;color:#e0e0e0;font-size:11.4px">Output</div>
<div class="t" style="left:57px;top:876.25px;color:#e0e0e0;font-size:10px">&#10005;</div>
<div style="left:1896.5px;top:871px;width:10px;height:9px;border:1px solid #d0d0d0;box-sizing:border-box;border-bottom-width:4px"></div>
<div style="left:39.5px;top:890.5px;width:1855px;height:1.25px;background:#2c2e30"></div>
<div style="left:40.5px;top:891.75px;width:135.25px;height:21.5px;background:#575b5f"></div>
<div class="t" style="left:50px;top:902.25px;color:#e4e4e4;font-size:11.4px">Debugger Console</div>
<div class="t" style="left:152px;top:902.25px;color:#e4e4e4;font-size:9px;font-weight:bold">&#10005;</div>
<div style="left:175.75px;top:891.75px;width:131.25px;height:21.5px;background:#25272a;border-right:1px solid #4a4d50;box-sizing:border-box"></div>
<div class="t" style="left:187.5px;top:902.25px;color:#e4e4e4;font-size:11.4px">PHLevelEdit (run)</div>
<div class="t" style="left:282.5px;top:902.25px;color:#e4e4e4;font-size:9px;font-weight:bold">&#10005;</div>
<div style="left:39.5px;top:913.25px;width:1855px;height:203.25px;background:#fff"></div>
<div class="ot" style="left:59px;top:928.25px;color:#8a8a8a">run:</div>
<div class="ot" style="left:59px;top:945.25px;color:#cc3030">Error: Could not find or load main class phleveledit.MainWindow</div>
<div class="ot" style="left:59px;top:962px;color:#cc3030">Java Result: 1</div>
<div class="ot" style="left:59px;top:978.75px;color:#3cb048">BUILD SUCCESSFUL (total time: 0 seconds)</div>
<svg style="left:14px;top:893.5px;width:15px;height:16px" viewBox="0 0 14 13"><path d="M.5 .5L7 6.500.5 12.500zM7 .5l6.500 6L7 12.500z" fill="#a4e03c"/></svg>
<svg style="left:14px;top:924.5px;width:15px;height:16px" viewBox="0 0 14 13"><path d="M.5 .5L7 6.500.5 12.500zM7 .5l6.500 6L7 12.500z" fill="#a4e03c"/></svg>
<div style="left:14.5px;top:954.5px;width:15px;height:15.5px;background:#b9abae"></div>
<svg style="left:14.5px;top:983.5px;width:14.5px;height:15px" viewBox="0 0 14.500 15"><path d="M2 1h5v4h6v4H8v5H3V9h4V5H2z" fill="#e8ecf0"/><circle cx="11" cy="12" r="2.500" fill="#c8d870"/></svg>
<div style="left:1894.5px;top:913.25px;width:16px;height:203.25px;background:#2e2d32;border-left:1px solid #4e5055;border-right:1px solid #4e5055;box-sizing:border-box"></div>
<div style="left:1895.5px;top:913.75px;width:14px;height:16px;background:#3a3a40"></div>
<div style="left:1895.5px;top:1100.5px;width:14px;height:16px;background:#3a3a40"></div>
<svg style="left:1898.5px;top:919px;width:9px;height:5.5px" viewBox="0 0 9 5.500"><path d="M0 5.500h9L4.500 0z" fill="#e8e8e8"/></svg>
<div style="left:1896.5px;top:929px;width:13px;height:1.25px;background:#6a6e72"></div>
<svg style="left:1898.5px;top:1104px;width:9px;height:5.5px" viewBox="0 0 9 5.500"><path d="M0 0h9L4.500 5.500z" fill="#e8e8e8"/></svg>
<div style="left:0px;top:1116.5px;width:1920px;height:33.5px;background:#343338"></div>
<svg style="left:9px;top:1131.5px;width:15px;height:12.5px" viewBox="0 0 15 12.500"><rect x="4" y="1" width="9" height="7" fill="none" stroke="#9a9ea4" stroke-width="1.400"/><rect x="1" y="4.500" width="9" height="7" fill="#3c3f41" stroke="#9a9ea4" stroke-width="1.400"/></svg>
<svg style="left:42.5px;top:1128px;width:16.5px;height:16.5px" viewBox="0 0 16.500 16.500"><circle cx="8.250" cy="8.250" r="7.500" fill="#f0f0f0"/><rect x="7" y="7" width="2.600" height="6" fill="#3c3f41"/><circle cx="8.250" cy="4.500" r="1.500" fill="#3c3f41"/></svg>
<div class="t" style="left:62.5px;top:1137.5px;color:#e0e0e0;font-size:11.4px">Notifications</div>
<div style="left:1825.5px;top:1125.5px;width:1.25px;height:21.5px;background:#55585b"></div>
<div style="left:1888.25px;top:1125.5px;width:1.25px;height:21.5px;background:#55585b"></div>
<div class="t" style="left:1844.5px;top:1137.5px;color:#d0d0d0;font-size:11px">17 | 2</div>
<div class="t" style="left:1894.5px;top:1137.5px;color:#d0d0d0;font-size:11px">INS</div>
<div style="left:676.75px;top:440px;width:801.25px;height:377px;border-radius:4px;box-shadow:0 2px 9px 3px rgba(0,0,0,.55);background:rgba(0,0,0,.3)"></div>
<div style="left:680.5px;top:442.5px;width:792.5px;height:367px;border-radius:7px 7px 3px 3px;border:1px solid #8793a3;box-sizing:border-box;background:linear-gradient(180deg,rgba(255,255,255,.10) 0,rgba(255,255,255,0) 12%),linear-gradient(100deg,#666e78 0,#5f6771 10%,#4b535f 17%,#2f3947 24%,#1b273b 32%,#15223a 48%,#131f34 73%,#2a3442 80%,#4a535e 87%,#5c646e 94%,#666e78 100%)"></div>
<div style="left:682px;top:799.5px;width:789.5px;height:8.5px;background:#1d2733"></div>
<div style="left:682.5px;top:475px;width:5.25px;height:115px;background:linear-gradient(180deg,#6a727c 0,#8a939e 50%,#7a838e 85%,#2a323c 100%)"></div>
<div style="left:682.5px;top:590px;width:5.25px;height:210px;background:#222a34"></div>
<div style="left:1465.5px;top:460px;width:5.5px;height:150px;background:linear-gradient(180deg,#6a727c 0,#8a929c 30%,#868e98 80%,#4a525c 100%)"></div>
<div style="left:1465.5px;top:610px;width:5.5px;height:190px;background:#3a424c"></div>
<div style="left:1357.25px;top:443px;width:28.5px;height:17px;background:linear-gradient(180deg,#8a94a0,#56606c 50%,#3e4854);border:1px solid #2a323c;border-top:none;border-radius:0 0 0 3px;box-sizing:border-box"></div>
<div style="left:1385.75px;top:443px;width:30px;height:17px;background:linear-gradient(180deg,#8a94a0,#56606c 50%,#3e4854);border:1px solid #2a323c;border-top:none;border-left:none;box-sizing:border-box"></div>
<div style="left:1415.75px;top:443px;width:50px;height:17px;background:linear-gradient(180deg,#e8a090,#cc4a38 50%,#b83020);border:1px solid #4a1a14;border-top:none;border-left:none;border-radius:0 0 3px 0;box-sizing:border-box"></div>
<div style="left:1366px;top:453.5px;width:11px;height:3.25px;background:#fff"></div>
<div style="left:1395.5px;top:448px;width:11px;height:9px;border:1px solid #fff;border-top-width:2px;box-sizing:border-box"></div>
<div class="t" style="left:1440.75px;top:452.38px;color:#fff;font-size:10px;font-weight:bold;transform:translate(-50%,-50%)">&#10005;</div>
<div style="left:691px;top:478px;width:26px;height:26px;border-radius:50%;background:radial-gradient(circle at 50% 30%,#9fd4ff 0,#3a8ae8 45%,#1450b0 100%);border:1px solid #c8daf0;box-sizing:border-box"></div>
<svg style="left:696px;top:484px;width:16px;height:14px" viewBox="0 0 16 14"><path d="M8 1L1.500 7 8 13V9.500h7v-5H8z" fill="#fff"/></svg>
<div style="left:722.5px;top:478.5px;width:25px;height:25px;border-radius:50%;background:radial-gradient(circle at 50% 30%,#d8dce0 0,#8a9098 50%,#60666e 100%);border:1px solid #aab0b8;box-sizing:border-box"></div>
<svg style="left:753px;top:489.5px;width:6.5px;height:4px" viewBox="0 0 8 5"><path d="M0 0h8L4 5z" fill="#5a8ad0"/></svg>
<div style="left:764px;top:479.25px;width:408px;height:23px;background:linear-gradient(180deg,#e4e6ea,#cfd2d7);border:1px solid #7a8088;box-sizing:border-box"></div>
<svg style="left:768.5px;top:483px;width:11.5px;height:15px" viewBox="0 0 11.500 15"><path d="M1 1h6l3.500 2v11H1z" fill="#f4dc70" stroke="#d8b840"/><path d="M1 1h3v13H1z" fill="#e8c850"/></svg>
<div class="t" style="left:791px;top:491.88px;color:#1a1a1a;font-size:12.4px">&laquo;</div>
<div class="t" style="left:806px;top:491.88px;color:#1a1a1a;font-size:12.4px">Java projects</div>
<svg style="left:887.5px;top:488px;width:4.5px;height:7px" viewBox="0 0 5 8"><path d="M0 0v8l5-4z" fill="#1a1a1a"/></svg>
<div class="t" style="left:902.25px;top:491.88px;color:#1a1a1a;font-size:12.4px">PHLevelEdit</div>
<svg style="left:979.5px;top:488px;width:4.5px;height:7px" viewBox="0 0 5 8"><path d="M0 0v8l5-4z" fill="#1a1a1a"/></svg>
<div class="t" style="left:994px;top:491.88px;color:#1a1a1a;font-size:12.4px">src</div>
<svg style="left:1020px;top:488px;width:4.5px;height:7px" viewBox="0 0 5 8"><path d="M0 0v8l5-4z" fill="#1a1a1a"/></svg>
<div class="t" style="left:1035px;top:491.88px;color:#1a1a1a;font-size:12.4px">phleveledit</div>
<svg style="left:1158.5px;top:489px;width:7px;height:4.5px" viewBox="0 0 8 5"><path d="M0 0h8L4 5z" fill="#1a2a5a"/></svg>
<div style="left:1171.75px;top:479.25px;width:28px;height:23px;background:linear-gradient(180deg,#e4e6ea,#cfd2d7);border:1px solid #7a8088;border-left:none;box-sizing:border-box"></div>
<svg style="left:1178.5px;top:484px;width:15px;height:13.5px" viewBox="0 0 15 13.500"><path d="M2 6a5 5 0 0 1 8-3M13 8a5 5 0 0 1-8 3" stroke="#4a88d0" stroke-width="1.800" fill="none"/><path d="M8 0l4 3-4 3zM7 14l-4-3 4-3z" fill="#4a88d0"/></svg>
<div style="left:1206.75px;top:479.25px;width:257.5px;height:23px;background:linear-gradient(180deg,#d8dbe0,#cdd1d7);border:1px solid #7a8088;box-sizing:border-box"></div>
<div class="t" style="left:1216px;top:491.88px;color:#8a9098;font-size:12.2px;font-style:italic">Search phleveledit</div>
<svg style="left:1448.5px;top:483.5px;width:12.5px;height:13.5px" viewBox="0 0 12.500 13.500"><circle cx="7.500" cy="5" r="3.600" fill="none" stroke="#4a78c0" stroke-width="1.600"/><path d="M5 8L1 12.500" stroke="#4a78c0" stroke-width="2.200"/></svg>
<div style="left:687.5px;top:510.25px;width:778px;height:290.5px;background:#fff"></div>
<div style="left:687.5px;top:510.25px;width:778px;height:33.5px;background:linear-gradient(180deg,#f4f8fd 0,#e4ecf7 50%,#dae4f2 100%);border-bottom:1px solid #c4cede;box-sizing:border-box"></div>
<div class="t" style="left:707.5px;top:526.62px;color:#2f4268;font-size:12.4px">Organize</div>
<svg style="left:763.5px;top:524px;width:9px;height:5.5px" viewBox="0 0 8 5"><path d="M0 0h8L4 5z" fill="#1a1a1a"/></svg>
<div class="t" style="left:803.75px;top:526.62px;color:#2f4268;font-size:12.4px">Include in library</div>
<svg style="left:904px;top:524px;width:9px;height:5.5px" viewBox="0 0 8 5"><path d="M0 0h8L4 5z" fill="#1a1a1a"/></svg>
<div class="t" style="left:945.25px;top:526.62px;color:#2f4268;font-size:12.4px">Share with</div>
<svg style="left:1009px;top:524px;width:9px;height:5.5px" viewBox="0 0 8 5"><path d="M0 0h8L4 5z" fill="#1a1a1a"/></svg>
<div class="t" style="left:1050.5px;top:526.62px;color:#2f4268;font-size:12.4px">Burn</div>
<div class="t" style="left:1109px;top:526.62px;color:#2f4268;font-size:12.4px">New folder</div>
<svg style="left:1336.5px;top:519.5px;width:16px;height:14px" viewBox="0 0 16 14"><path d="M1 2h3M1 6h3M1 10h3" stroke="#7a90b0" stroke-width="2"/><path d="M6 2h9M6 6h9M6 10h9" stroke="#9aa8c0" stroke-width="1.400"/></svg>
<svg style="left:1363px;top:524px;width:9px;height:5.5px" viewBox="0 0 8 5"><path d="M0 0h8L4 5z" fill="#1a1a1a"/></svg>
<svg style="left:1393.5px;top:518.5px;width:19px;height:16px" viewBox="0 0 19 16"><rect x=".7" y=".7" width="17.600" height="14.600" fill="#fff" stroke="#6a86a8" stroke-width="1.400"/><rect x="11" y="2" width="6.500" height="12" fill="#7fd0c8"/></svg>
<div style="left:1432.5px;top:518px;width:17px;height:17px;border-radius:50%;background:radial-gradient(circle at 50% 30%,#8ab0f0,#2a50c0 60%,#1a3090)"></div>
<div class="t" style="left:1441px;top:527.88px;color:#fff;font-size:11px;font-weight:bold;transform:translate(-50%,-50%)">?</div>
<svg style="left:710.5px;top:556.5px;width:15.5px;height:15px" viewBox="0 0 15.500 15"><path d="M7.750 .5l2.200 4.800 5 .6-3.700 3.500 1 5.100-4.500-2.600-4.500 2.600 1-5.100L.5 5.900l5-.6z" fill="#f8c838" stroke="#d89818" stroke-width=".8"/></svg>
<div class="t" style="left:732.75px;top:565.38px;color:#1a1a1a;font-size:12.4px">Favorites</div>
<svg style="left:720px;top:579.5px;width:17.5px;height:14.5px" viewBox="0 0 17.500 14.500"><rect x=".5" y=".5" width="16.500" height="11" fill="#2a5ab0" stroke="#8aa8d8"/><rect x="2" y="2" width="13.500" height="8" fill="#3a78d8"/><rect x="4" y="12.500" width="9.500" height="2" fill="#a8b4c8"/></svg>
<div class="t" style="left:743.25px;top:587.88px;color:#1a1a1a;font-size:12.4px">Desktop</div>
<svg style="left:721px;top:601.5px;width:16px;height:16px" viewBox="0 0 16 16"><path d="M1 2h6l2 2h6v11H1z" fill="#e8c860"/><path d="M8 5v7M5 9l3 3.500L11 9" stroke="#3a88e0" stroke-width="2.400" fill="none"/></svg>
<div class="t" style="left:743.25px;top:610.38px;color:#1a1a1a;font-size:12.4px">Downloads</div>
<svg style="left:721px;top:624px;width:16px;height:16px" viewBox="0 0 16 16"><rect x="1" y="1" width="12" height="13" fill="#e8ecf4" stroke="#9aa8c0"/><path d="M3 4h8M3 7h8M3 10h8" stroke="#8a98b0"/><circle cx="12" cy="12" r="3.500" fill="#c8d4e8" stroke="#6a88b8"/></svg>
<div class="t" style="left:743.25px;top:632.62px;color:#1a1a1a;font-size:12.4px">Recent Places</div>
<svg style="left:709.5px;top:668.5px;width:17.5px;height:15.5px" viewBox="0 0 17.500 15.500"><path d="M1 4h5l2 2h8v9H1z" fill="#e8d078"/><rect x="9" y="1" width="7" height="9" fill="#78c8e8"/><rect x="3" y="2" width="7" height="9" fill="#88d088"/></svg>
<div class="t" style="left:732px;top:677.62px;color:#1a1a1a;font-size:12.4px">Libraries</div>
<svg style="left:722.5px;top:690.5px;width:13.5px;height:16px" viewBox="0 0 13.500 16"><path d="M.5 .5h8.500l4 4v11H.5z" fill="#f8fafc" stroke="#9aa8c0"/><rect x="3" y="6" width="6" height="6" fill="#a8c0e0"/></svg>
<div class="t" style="left:742px;top:699.88px;color:#1a1a1a;font-size:12.4px">Documents</div>
<svg style="left:721.5px;top:712px;width:15px;height:16.5px" viewBox="0 0 15 16.500"><ellipse cx="5" cy="12.500" rx="4.500" ry="3.500" fill="#3aa0e0"/><path d="M8.500 12.500V1.500q2 4 5.500 4" stroke="#3aa0e0" stroke-width="2" fill="none"/></svg>
<div class="t" style="left:742px;top:721.88px;color:#1a1a1a;font-size:12.4px">Music</div>
<div style="left:720px;top:732.5px;width:125px;height:11.75px;overflow:hidden"><div class="t" style="left:22px;top:9.75px;color:#1a1a1a;font-size:12.4px">Pictures</div><svg style="left:1.5px;top:2.5px;width:16px;height:15px" viewBox="0 0 16 15"><rect x=".5" y=".5" width="15" height="12" fill="#dff0ff" stroke="#6a98d0"/><path d="M2 11l4-5 3 3 3-4 3 6z" fill="#4a88d0"/></svg></div>
<div style="left:839.5px;top:543.75px;width:15px;height:200.5px;background:#f0f0f0;border-left:1px solid #e0e0e0;box-sizing:border-box"></div>
<svg style="left:843px;top:551.5px;width:7.5px;height:4.5px" viewBox="0 0 8 5"><path d="M0 5h8L4 0z" fill="#505860"/></svg>
<svg style="left:843px;top:732px;width:7.5px;height:4.5px" viewBox="0 0 8 5"><path d="M0 0h8L4 5z" fill="#505860"/></svg>
<div style="left:840.5px;top:563.5px;width:13px;height:68.5px;background:linear-gradient(90deg,#f4f4f4,#d8d8d8);border:1px solid #9a9a9a;border-radius:1px;box-sizing:border-box"></div>
<div style="left:844px;top:594px;width:6px;height:1px;background:#707070"></div>
<div style="left:844px;top:597px;width:6px;height:1px;background:#707070"></div>
<div style="left:844px;top:600px;width:6px;height:1px;background:#707070"></div>
<div style="left:858.5px;top:543.75px;width:1px;height:200.5px;background:#e4e8f0"></div>
<div class="t" style="left:878px;top:558.12px;color:#4c607a;font-size:12.4px">Name</div>
<svg style="left:1005.5px;top:544.5px;width:6.5px;height:3.5px" viewBox="0 0 8 4"><path d="M0 4L4 0l4 4" stroke="#7a8aa0" fill="none" stroke-width="1.200"/></svg>
<div class="t" style="left:1155px;top:558.12px;color:#4c607a;font-size:12.4px">Date modified</div>
<div class="t" style="left:1282.75px;top:558.12px;color:#4c607a;font-size:12.4px">Type</div>
<div class="t" style="left:1410.5px;top:558.12px;color:#4c607a;font-size:12.4px">Size</div>
<svg style="left:880.5px;top:579.5px;width:13.5px;height:17px" viewBox="0 0 13.500 17"><path d="M.5 .5h8.500l4 4v12H.5z" fill="#fafbfc" stroke="#a8b0b8"/><path d="M9 .5v4h4" fill="#e4e8ec" stroke="#a8b0b8"/></svg>
<div class="t" style="left:899.25px;top:589.38px;color:#1a1a1a;font-size:12.4px">ClickedColumnCellRenderer.java</div>
<div class="t" style="left:1155px;top:589.38px;color:#7c8188;font-size:12.4px">11/17/2013 19:36</div>
<div class="t" style="left:1282.75px;top:589.38px;color:#7c8188;font-size:12.4px">JAVA File</div>
<div class="t" style="left:1456.5px;top:589.38px;color:#7c8188;font-size:12.4px">1</div>
<svg style="left:880.5px;top:601.75px;width:13.5px;height:17px" viewBox="0 0 13.500 17"><path d="M.5 .5h8.500l4 4v12H.5z" fill="#fafbfc" stroke="#a8b0b8"/><path d="M9 .5v4h4" fill="#e4e8ec" stroke="#a8b0b8"/></svg>
<div class="t" style="left:899.25px;top:611.62px;color:#1a1a1a;font-size:12.4px">MainWindow.java</div>
<div class="t" style="left:1155px;top:611.62px;color:#7c8188;font-size:12.4px">11/17/2013 20:11</div>
<div class="t" style="left:1282.75px;top:611.62px;color:#7c8188;font-size:12.4px">JAVA File</div>
<div class="t" style="left:1456.5px;top:611.62px;color:#7c8188;font-size:12.4px">5</div>
<div style="left:859.5px;top:727px;width:606px;height:17.25px;background:#f0f0f0;border-top:1px solid #e0e0e0;box-sizing:border-box"></div>
<svg style="left:864px;top:733px;width:4.5px;height:7.5px" viewBox="0 0 5 8"><path d="M5 0v8L0 4z" fill="#505860"/></svg>
<svg style="left:1453.5px;top:733px;width:4.5px;height:7.5px" viewBox="0 0 5 8"><path d="M0 0v8l5-4z" fill="#505860"/></svg>
<div style="left:876.5px;top:729.5px;width:539px;height:13.5px;background:linear-gradient(180deg,#f4f4f4,#d4d4d4);border:1px solid #9a9a9a;border-radius:1px;box-sizing:border-box"></div>
<div style="left:1144px;top:733px;width:1px;height:6.5px;background:#707070"></div>
<div style="left:1147px;top:733px;width:1px;height:6.5px;background:#707070"></div>
<div style="left:1150px;top:733px;width:1px;height:6.5px;background:#707070"></div>
<div style="left:687.5px;top:744.25px;width:778px;height:56.5px;background:linear-gradient(180deg,#f3f7fc,#e9f0f9);border-top:1px solid #d4dcea;box-sizing:border-box"></div>
<svg style="left:709.5px;top:750.5px;width:32.5px;height:44px" viewBox="0 0 32.500 44"><path d="M2 6l12-4v36L2 42z" fill="#e8c44a"/><path d="M6 4h16v36H6z" fill="#fbf6dc"/><path d="M12 8l14-5v35l-14 5z" fill="#f4d86a"/><path d="M12 8l14-5v35l-14 5z" fill="url(#fg)"/><defs><linearGradient id="fg" x1="0" x2="1"><stop offset="0" stop-color="#f8e488"/><stop offset="1" stop-color="#e0b840"/></linearGradient></defs></svg>
<div class="t" style="left:774.5px;top:763.12px;color:#3a3a3a;font-size:12.4px">2 items</div>
</div></body></html>
